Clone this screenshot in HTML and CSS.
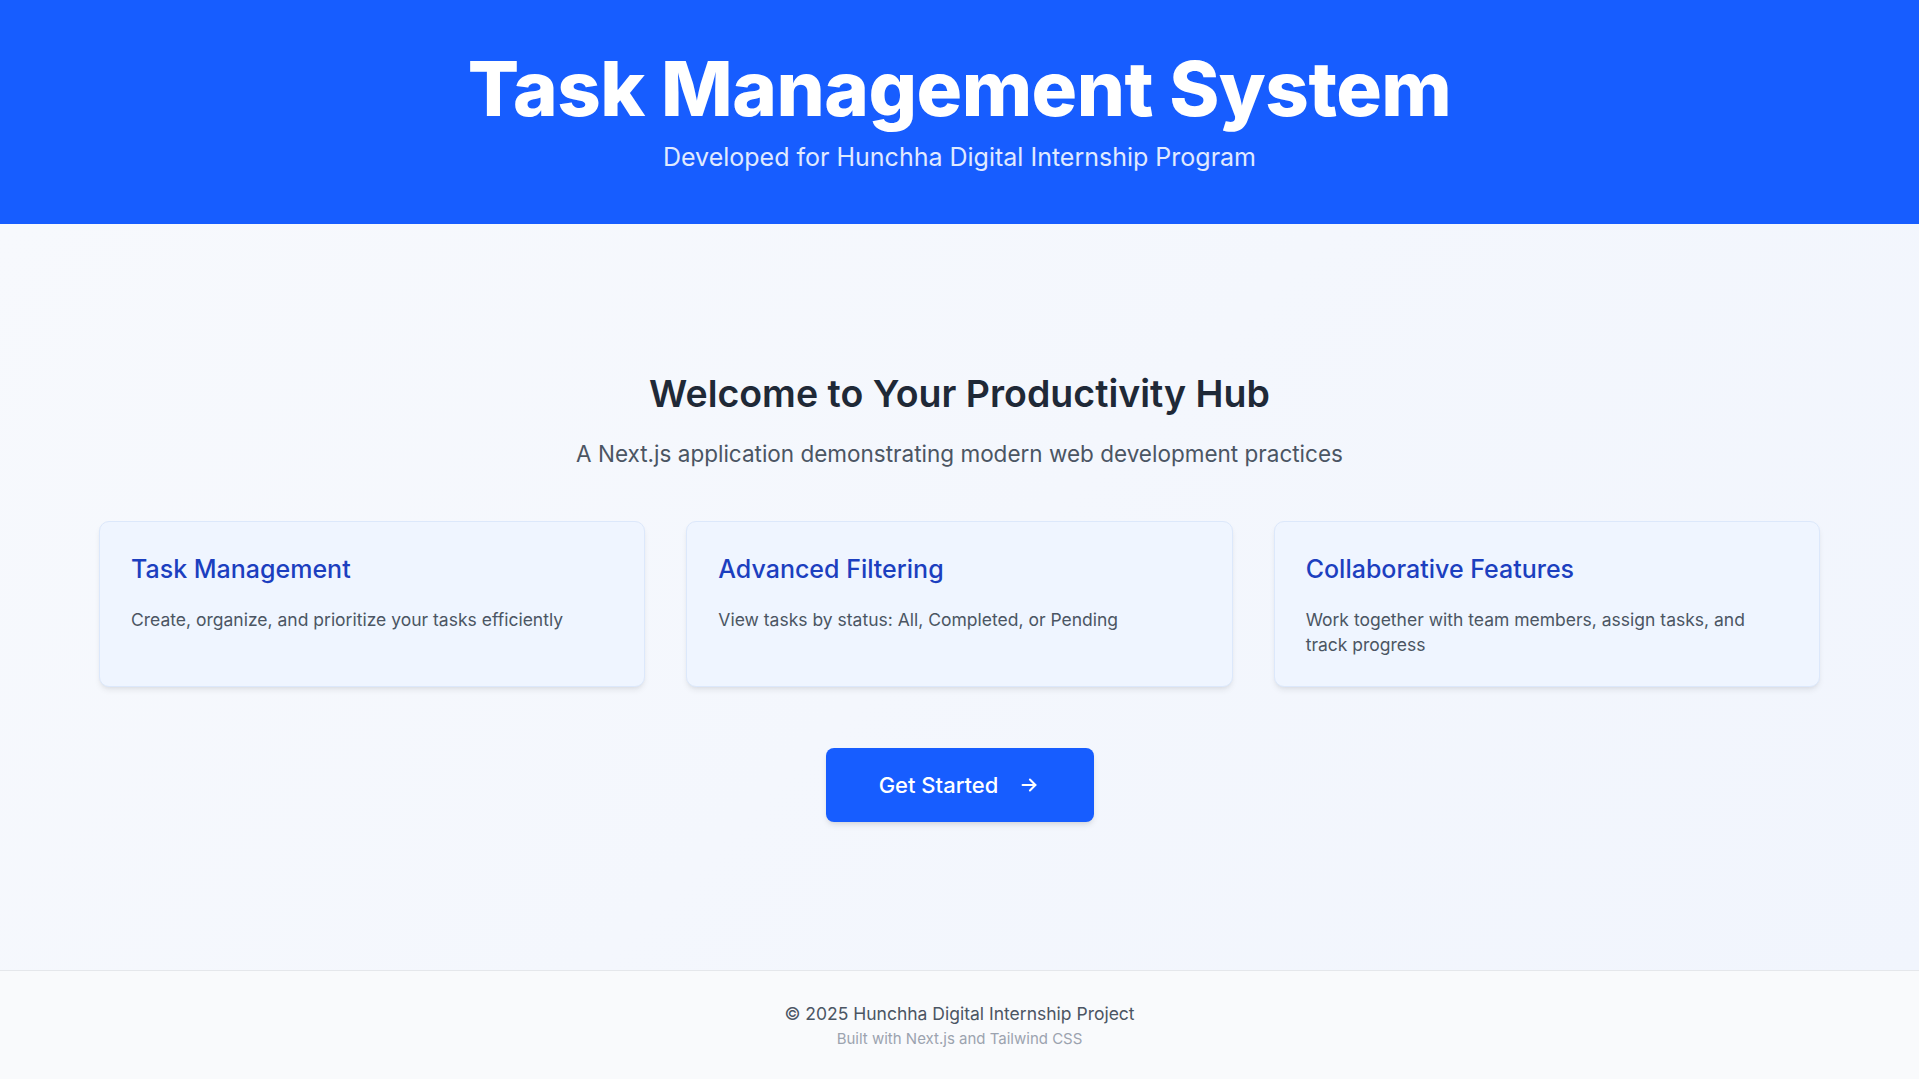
FILE: index.html
```html
<!DOCTYPE html>
<html lang="en">
<head>
<meta charset="utf-8">
<title>Task Management System</title>
<link rel="stylesheet" href="styles.css">
</head>
<body>
<div class="page">
  <header class="hero">
    <h1 class="hero-title">Task Management System</h1>
    <p class="hero-sub">Developed for Hunchha Digital Internship Program</p>
  </header>
  <main class="main">
    <section class="content">
      <h2 class="welcome">Welcome to Your Productivity Hub</h2>
      <p class="lead">A Next.js application demonstrating modern web development practices</p>
      <div class="cards">
        <div class="card">
          <h3 class="card-title">Task Management</h3>
          <p class="card-text">Create, organize, and prioritize your tasks efficiently</p>
        </div>
        <div class="card">
          <h3 class="card-title">Advanced Filtering</h3>
          <p class="card-text">View tasks by status: All, Completed, or Pending</p>
        </div>
        <div class="card">
          <h3 class="card-title">Collaborative Features</h3>
          <p class="card-text">Work together with team members, assign tasks, and track progress</p>
        </div>
      </div>
      <a class="cta" href="#">
        <span>Get Started</span>
        <svg class="cta-icon" viewBox="0 0 24 24" width="22" height="22" fill="none" stroke="currentColor" stroke-width="2.2" stroke-linecap="round" stroke-linejoin="round"><path d="M5 12h14"/><path d="M13 6l6 6-6 6"/></svg>
      </a>
    </section>
  </main>
  <footer class="footer">
    <p class="copy">© 2025 Hunchha Digital Internship Project</p>
    <p class="built">Built with Next.js and Tailwind CSS</p>
  </footer>
</div>
</body>
</html>
```
FILE: styles.css
```css
* { box-sizing: border-box; }
html, body { margin: 0; padding: 0; }
body {
  font-family: Inter, "Noto Sans", sans-serif;
  color: #1f2937;
}
.page {
  min-height: 100vh;
  display: flex;
  flex-direction: column;
}
.hero {
  background: #175dff;
  color: #fff;
  text-align: center;
  height: 224px;
  padding-top: 46px;
}
.hero-title {
  margin: 0;
  font-size: 76px;
  line-height: 84px;
  font-weight: 800;
  letter-spacing: -0.5px;
}
.hero-sub {
  margin: 11px 0 0;
  font-size: 25px;
  line-height: 32px;
  color: #e0eaff;
}
.main {
  flex: 1;
  display: flex;
  align-items: center;
  justify-content: center;
  background: linear-gradient(135deg, #f7f9fd 0%, #f1f5fd 100%);
}
.content {
  width: 100%;
  padding: 0 99px;
  display: flex;
  flex-direction: column;
  align-items: center;
}
.welcome {
  margin: 0;
  font-size: 37.5px;
  line-height: 44px;
  font-weight: 600;
  color: #1f2937;
}
.lead {
  margin: 22px 0 0;
  font-size: 22.5px;
  line-height: 32px;
  color: #4b5563;
}
.cards {
  width: 100%;
  margin-top: 51px;
  display: grid;
  grid-template-columns: repeat(3, 1fr);
  gap: 41px;
}
.card {
  background: #eff5ff;
  border: 1px solid #dce8fb;
  border-radius: 10px;
  padding: 31px 31px;
  height: 166px;
  box-shadow: 0 4px 6px -1px rgba(0,0,0,0.08), 0 2px 4px -2px rgba(0,0,0,0.06);
}
.card-title {
  margin: 0 0 22px;
  font-size: 25px;
  line-height: 32px;
  font-weight: 500;
  color: #1c3fbf;
}
.card-text {
  margin: 0;
  font-size: 17.5px;
  line-height: 25px;
  color: #4b5563;
}
.cta {
  margin-top: 61px;
  display: inline-flex;
  align-items: center;
  justify-content: center;
  gap: 20px;
  width: 268px;
  height: 74px;
  background: #175dff;
  color: #fff;
  border-radius: 8px;
  text-decoration: none;
  font-size: 22px;
  font-weight: 500;
  box-shadow: 0 4px 6px -1px rgba(0,0,0,0.1), 0 2px 4px -2px rgba(0,0,0,0.08);
}
.cta-icon { display: block; }
.footer {
  border-top: 1px solid #e5e7eb;
  background: #f9fafc;
  text-align: center;
  height: 109px;
  padding-top: 30px;
}
.copy {
  margin: 0;
  font-size: 17.5px;
  line-height: 26px;
  color: #4b5563;
}
.built {
  margin: 2px 0 0;
  font-size: 15px;
  line-height: 20px;
  color: #9ca3af;
}
```
